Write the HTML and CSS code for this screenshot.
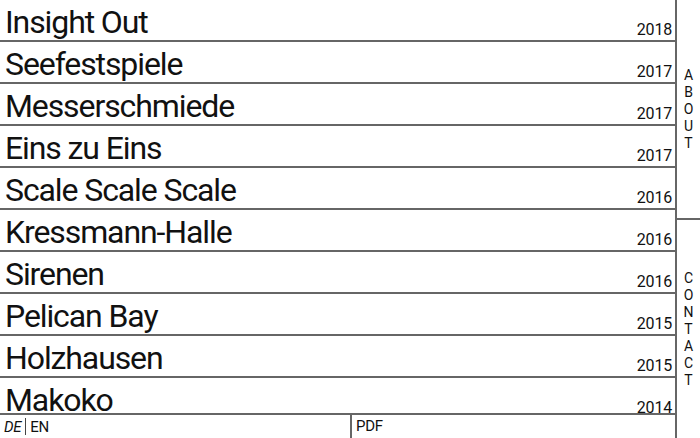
FILE: index.html
```html
<!DOCTYPE html>
<html lang="de">
<head>
  <meta charset="UTF-8">
  <title>Projekte</title>
  <link rel="stylesheet" href="styles.css">
</head>
<body>
  <div class="page">
    <main class="main">
      <ul class="projects">
        <li class="project"><span class="title">Insight Out</span><span class="year">2018</span></li>
        <li class="project"><span class="title">Seefestspiele</span><span class="year">2017</span></li>
        <li class="project"><span class="title">Messerschmiede</span><span class="year">2017</span></li>
        <li class="project"><span class="title">Eins zu Eins</span><span class="year">2017</span></li>
        <li class="project"><span class="title">Scale Scale Scale</span><span class="year">2016</span></li>
        <li class="project"><span class="title">Kressmann-Halle</span><span class="year">2016</span></li>
        <li class="project"><span class="title">Sirenen</span><span class="year">2016</span></li>
        <li class="project"><span class="title">Pelican Bay</span><span class="year">2015</span></li>
        <li class="project"><span class="title">Holzhausen</span><span class="year">2015</span></li>
        <li class="project"><span class="title">Makoko</span><span class="year">2014</span></li>
        <li class="project"><span class="title">Rotunde</span><span class="year">2014</span></li>
      </ul>
      <footer class="footer">
        <div class="lang"><em>DE</em><span class="sep"></span><span>EN</span></div>
        <div class="pdf">PDF</div>
      </footer>
    </main>
    <nav class="side">
      <a class="side-link">ABOUT</a>
      <a class="side-link">CONTACT</a>
    </nav>
  </div>
</body>
</html>
```

FILE: styles.css
```css
* {
  box-sizing: border-box;
}
html, body {
  margin: 0;
  height: 100%;
  overflow: hidden;
}
body {
  font-family: Roboto, "Liberation Sans", sans-serif;
  color: #111;
  background: #fff;
}
.page {
  display: flex;
  height: 100%;
}
.main {
  flex: 1;
  display: flex;
  flex-direction: column;
  border-right: 2px solid #666;
  min-width: 0;
}
.projects {
  list-style: none;
  margin: 0;
  padding: 0;
  flex: 1;
  overflow: hidden;
}
.project {
  display: flex;
  justify-content: space-between;
  align-items: flex-end;
  height: 42px;
  border-bottom: 2px solid #666;
  padding: 0 3px 0 5px;
}
.title {
  font-size: 32px;
  line-height: 36px;
  letter-spacing: -1.1px;
}
.year {
  font-size: 16px;
  line-height: 16px;
  padding-bottom: 2px;
  letter-spacing: -0.2px;
}
.footer {
  display: flex;
  height: 25px;
  border-top: 2px solid #666;
  font-size: 15px;
  line-height: 22px;
  letter-spacing: -0.3px;
}
.lang {
  width: 350px;
  display: flex;
  align-items: center;
  padding-left: 4px;
}
.lang em {
  font-style: italic;
}
.sep {
  display: inline-block;
  width: 1px;
  height: 17px;
  background: #444;
  margin: 0 4px;
}
.pdf {
  flex: 1;
  border-left: 2px solid #666;
  padding-left: 4px;
}
.side {
  width: 23px;
  display: flex;
  flex-direction: column;
}
.side-link {
  flex: 1;
  display: flex;
  align-items: center;
  justify-content: center;
  writing-mode: vertical-lr;
  text-orientation: upright;
  font-size: 14px;
  letter-spacing: 1px;
  color: #111;
}
.side-link + .side-link {
  border-top: 2px solid #666;
}
```
